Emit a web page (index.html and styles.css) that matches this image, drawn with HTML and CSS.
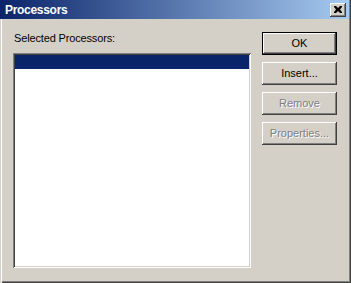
FILE: index.html
```html
<!DOCTYPE html>
<html>
<head>
<meta charset="utf-8">
<link rel="stylesheet" href="styles.css">
</head>
<body>
<div class="window">
  <div class="titlebar">
    <span class="title">Processors</span>
    <span class="close">
      <svg width="8" height="7" viewBox="0 0 8 7"><path d="M0 0h2l2 2 2-2h2v1L6 3.5 8 6v1H6L4 5 2 7H0V6l2-2.5L0 1z" fill="#000"/></svg>
    </span>
  </div>
  <div class="content">
    <div class="left">
      <div class="label">Selected Processors:</div>
      <div class="listbox"><div class="sel"></div></div>
    </div>
    <div class="buttons">
      <div class="btn default"><span>OK</span></div>
      <div class="btn"><span>Insert...</span></div>
      <div class="btn disabled"><span>Remove</span></div>
      <div class="btn disabled"><span>Properties...</span></div>
    </div>
  </div>
</div>
</body>
</html>
```
FILE: styles.css
```css
html, body {
  margin: 0;
  padding: 0;
  background: #d4d0c8;
}
.window {
  width: 351px;
  height: 283px;
  box-sizing: border-box;
  display: flex;
  flex-direction: column;
  background: #d4d0c8;
  box-shadow: inset -1px -1px #404040, inset -2px -2px #808080;
  font-family: "Liberation Sans", Arial, sans-serif;
  font-size: 11px;
  color: #000;
}
.titlebar {
  height: 19px;
  margin-right: 2px;
  display: flex;
  align-items: center;
  justify-content: space-between;
  padding: 0 3px 0 5px;
  background: linear-gradient(to right, #0a246a, #a6caf0);
}
.title {
  color: #fff;
  font-weight: bold;
  font-size: 12px;
  letter-spacing: -0.3px;
  line-height: 14px;
}
.close {
  width: 16px;
  height: 14px;
  box-sizing: border-box;
  display: flex;
  align-items: center;
  justify-content: center;
  background: #d4d0c8;
  box-shadow: inset -1px -1px #404040, inset 1px 1px #fff, inset -2px -2px #808080;
}
.close svg { display: block; margin-left: -1px; }
.content {
  flex: 1;
  display: flex;
  padding: 13px 0 0 13px;
  gap: 11px;
  box-shadow: inset 1px 0 #d4d0c8, inset 2px 0 #fff;
}
.left {
  display: flex;
  flex-direction: column;
}
.label {
  line-height: 13px;
  height: 13px;
  margin: 0 0 8px 1px;
  letter-spacing: -0.15px;
}
.listbox {
  width: 238px;
  height: 215px;
  box-sizing: border-box;
  padding: 2px;
  background: #fff;
  box-shadow: inset 1px 1px #808080, inset -1px -1px #fff, inset 2px 2px #404040, inset -2px -2px #d4d0c8;
}
.sel {
  height: 14px;
  background: #0a246a;
}
.buttons {
  display: flex;
  flex-direction: column;
  gap: 7px;
}
.btn {
  width: 75px;
  height: 23px;
  box-sizing: border-box;
  display: flex;
  align-items: center;
  justify-content: center;
  background: #d4d0c8;
  box-shadow: inset -1px -1px #404040, inset 1px 1px #fff, inset -2px -2px #808080;
  line-height: 13px;
}
.btn.default {
  border: 1px solid #000;
}
.btn.disabled span {
  color: #808080;
  text-shadow: 1px 1px #fff;
}
```
